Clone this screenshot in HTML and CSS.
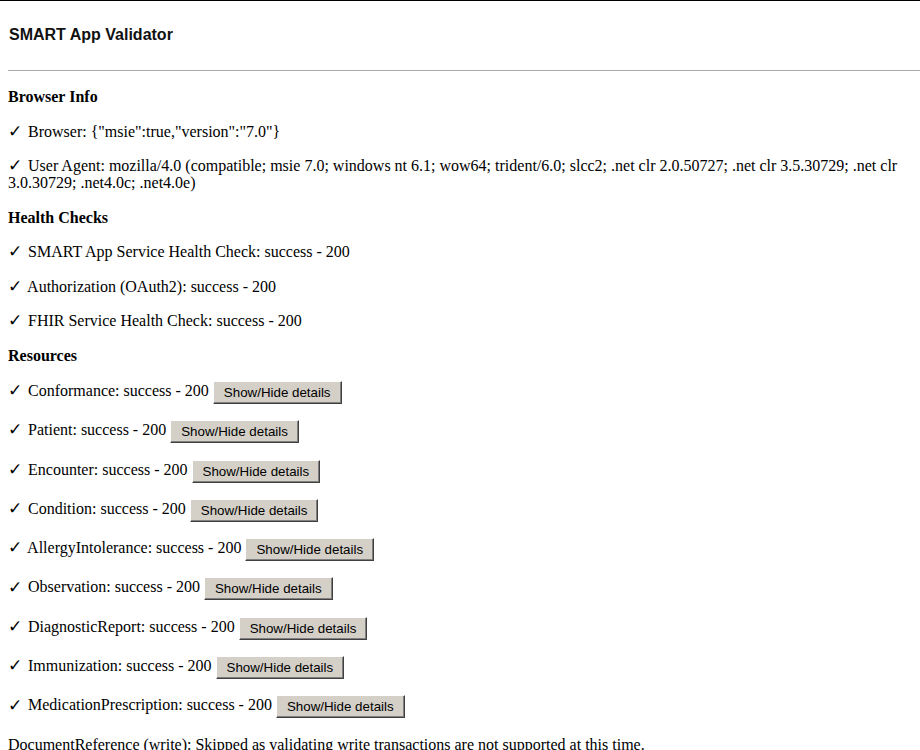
FILE: index.html
```html
<!DOCTYPE html>
<html>
<head>
<meta charset="utf-8">
<title>SMART App Validator</title>
<link rel="stylesheet" href="styles.css">
</head>
<body>
<div class="topline"></div>
<header class="header">
  <h1 class="title">SMART App Validator</h1>
</header>
<hr class="rule">
<main class="content">
  <h4 class="section">Browser Info</h4>
  <p class="item"><span class="check">✓</span> Browser: {"msie":true,"version":"7.0"}</p>
  <p class="item"><span class="check">✓</span> User Agent: mozilla/4.0 (compatible; msie 7.0; windows nt 6.1; wow64; trident/6.0; slcc2; .net clr 2.0.50727; .net clr 3.5.30729; .net clr 3.0.30729; .net4.0c; .net4.0e)</p>

  <h4 class="section">Health Checks</h4>
  <p class="item"><span class="check">✓</span> SMART App Service Health Check: success - 200</p>
  <p class="item"><span class="check">✓</span> Authorization (OAuth2): success - 200</p>
  <p class="item"><span class="check">✓</span> FHIR Service Health Check: success - 200</p>

  <h4 class="section">Resources</h4>
  <p class="item row"><span class="check">✓</span> Conformance: success - 200 <button class="btn">Show/Hide details</button></p>
  <p class="item row"><span class="check">✓</span> Patient: success - 200 <button class="btn">Show/Hide details</button></p>
  <p class="item row"><span class="check">✓</span> Encounter: success - 200 <button class="btn">Show/Hide details</button></p>
  <p class="item row"><span class="check">✓</span> Condition: success - 200 <button class="btn">Show/Hide details</button></p>
  <p class="item row"><span class="check">✓</span> AllergyIntolerance: success - 200 <button class="btn">Show/Hide details</button></p>
  <p class="item row"><span class="check">✓</span> Observation: success - 200 <button class="btn">Show/Hide details</button></p>
  <p class="item row"><span class="check">✓</span> DiagnosticReport: success - 200 <button class="btn">Show/Hide details</button></p>
  <p class="item row"><span class="check">✓</span> Immunization: success - 200 <button class="btn">Show/Hide details</button></p>
  <p class="item row"><span class="check">✓</span> MedicationPrescription: success - 200 <button class="btn">Show/Hide details</button></p>
  <p class="item">DocumentReference (write): Skipped as validating write transactions are not supported at this time.</p>
</main>
</body>
</html>
```
FILE: styles.css
```css
html, body {
  margin: 0;
  padding: 0;
  background: #fff;
}
body {
  font-family: "Liberation Serif", "Times New Roman", serif;
  font-size: 16px;
  line-height: 17px;
  color: #000;
  overflow: hidden;
}
.topline {
  height: 1px;
  background: #000;
}
.header {
  padding: 0 8px;
}
.title {
  font-family: "Liberation Sans", Arial, sans-serif;
  font-size: 16px;
  line-height: 18px;
  font-weight: bold;
  color: #111;
  margin: 25px 0 0 1px;
}
.rule {
  border: 0;
  border-top: 1px solid #aaa;
  height: 0;
  margin: 26px 0 0 8px;
}
.content {
  padding: 0 8px;
}
.section {
  font-size: 16px;
  font-weight: bold;
  margin: 17px 0 17.5px;
  line-height: 17px;
}
.item {
  margin: 17.5px 0;
}
.item.row {
  margin: 16.3px 0;
}
.check {
  font-family: "DejaVu Sans", sans-serif;
  font-size: 17px;
  font-weight: bold;
  line-height: 17px;
  display: inline-block;
  width: 16px;
  margin-left: 0;
}
.btn {
  font-family: "Liberation Sans", Arial, sans-serif;
  font-size: 13.33px;
  line-height: 15px;
  color: #000;
  background: #d4d0c8;
  border: 1px solid;
  border-color: #fff #404040 #404040 #fff;
  box-shadow: inset -1px -1px 0 #808080;
  padding: 3px 10px;
  margin: 0;
  height: 23px;
  vertical-align: middle;
  border-radius: 0;
}
```
